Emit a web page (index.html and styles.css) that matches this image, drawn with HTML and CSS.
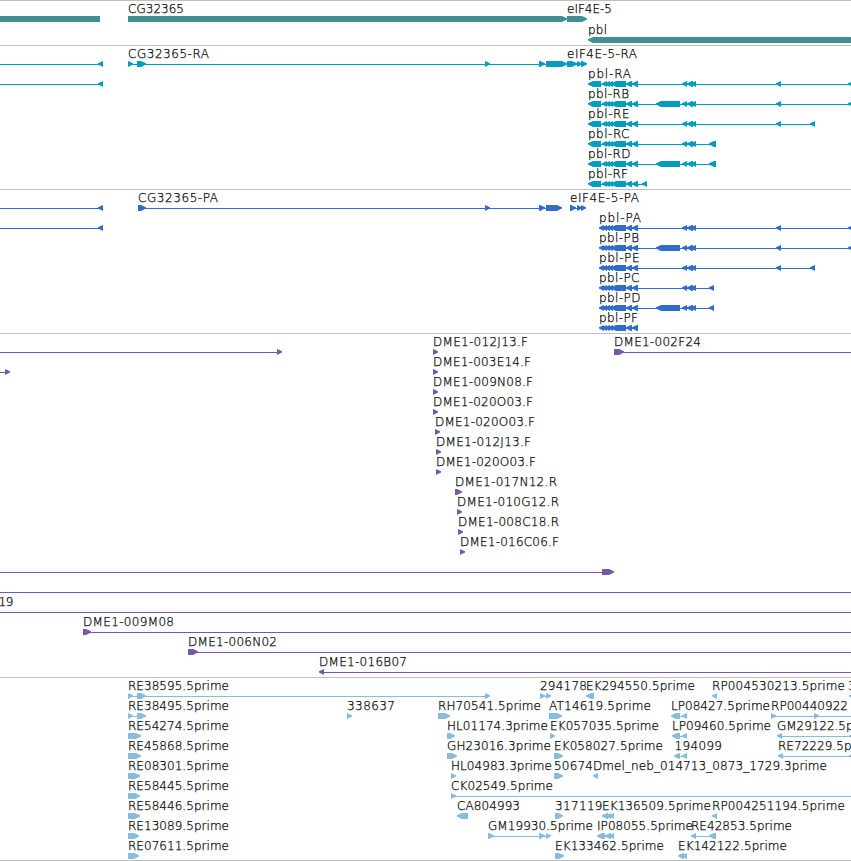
FILE: index.html
```html
<!DOCTYPE html>
<html lang="en">
<head>
<meta charset="utf-8">
<title>Genome browser</title>
<link rel="stylesheet" href="styles.css">
</head>
<body>
<main class="browser" id="browser"></main>
<script src="tracks.js"></script>
</body>
</html>
```
FILE: styles.css
```css
html, body {
  margin: 0;
  background: #fff;
}

body {
  overflow: hidden;
}

.browser {
  display: flex;
  flex-direction: column;
  width: 851px;
  border-bottom: 1px solid #bebebe;
}

.track {
  box-sizing: border-box;
  border-top: 1px solid #bebebe;
  overflow: hidden;
}

.track svg {
  display: block;
}

.genes { height: 45px; color: #3f8e94; }
.transcripts { height: 144px; color: #009dbf; }
.proteins { height: 144px; color: #316ccb; }
.bacs { height: 344px; color: #7758a7; }
.ests { height: 183px; color: #88bcdd; }

.label {
  fill: #000;
  stroke: #000;
  stroke-width: 0.25px;
  font: 200 12px "DejaVu Sans Light", "DejaVu Sans", sans-serif;
}

.shape {
  fill: currentColor;
}

.span {
  fill: currentColor;
  shape-rendering: crispEdges;
}
```
FILE: tracks.js
```js
// Feature: [row, label, label x, label end x, strand, span, exons]
// span is [from, to] or null; exons are [from, to] pairs.
const exonsR = [[588, 601], [602, 607], [605, 610], [608, 613], [611, 626], [626, 632], [632, 638]];
const exonsP = [[599, 604], [602, 607], [605, 610], [608, 613], [611, 626], [626, 632], [632, 638]];
const middle = [[682, 687], [687, 693], [691, 696]];
const big = [[656, 680]];
const far = [[776, 781]];
const edge = [[848, 860]];

const tracks = [
  { name: "genes", height: 44, pitch: 21, base: 12, features: [
    [0, "", 0, 0, 0, null, [[0, 100]]],
    [0, "CG32365", 128, 184, 1, null, [[128, 567]]],
    [0, "eIF4E-5", 567, 612, 1, null, [[567, 587]]],
    [1, "pbl", 588, 607, -1, null, [[588, 860]]]
  ]},
  { name: "transcripts", height: 143, pitch: 20, base: 12, features: [
    [0, "", 0, 0, -1, [0, 100], [[98, 103]]],
    [1, "", 0, 0, -1, [0, 100], [[98, 103]]],
    [0, "CG32365-RA", 128, 209, 1, [130, 560], [[128, 133], [137, 146], [485, 490], [539, 545], [546, 567]]],
    [0, "eIF4E-5-RA", 567, 637, 1, [570, 584], [[567, 577], [577, 582], [581, 587]]],
    [1, "pbl-RA", 588, 631, -1, [592, 851], [...exonsR, ...middle, ...far, ...edge]],
    [2, "pbl-RB", 588, 629, -1, [592, 851], [...exonsR, ...big, ...middle, ...far, ...edge]],
    [3, "pbl-RE", 588, 629.5, -1, [592, 812], [...exonsR, ...middle, ...far, [810, 815]]],
    [4, "pbl-RC", 588, 629.5, -1, [592, 712], [...exonsR, ...middle, [709, 716]]],
    [5, "pbl-RD", 588, 630.5, -1, [592, 712], [...exonsR, ...big, ...middle, [709, 716]]],
    [6, "pbl-RF", 588, 628, -1, [592, 645], [...exonsR, [642, 647]]]
  ]},
  { name: "proteins", height: 143, pitch: 20, base: 12, features: [
    [0, "", 0, 0, -1, [0, 100], [[98, 103]]],
    [1, "", 0, 0, -1, [0, 100], [[98, 103]]],
    [0, "CG32365-PA", 138, 218, 1, [140, 558], [[138, 146], [485, 490], [539, 545], [546, 562]]],
    [0, "eIF4E-5-PA", 570, 639, 1, [572, 584], [[570, 576], [577, 582], [581, 586]]],
    [1, "pbl-PA", 599, 641, -1, [602, 851], [...exonsP, ...middle, ...far, ...edge]],
    [2, "pbl-PB", 599, 639, -1, [602, 851], [...exonsP, ...big, ...middle, ...far, ...edge]],
    [3, "pbl-PE", 599, 639.5, -1, [602, 812], [...exonsP, ...middle, ...far, [810, 815]]],
    [4, "pbl-PC", 599, 639.5, -1, [602, 712], [...exonsP, ...middle, [709, 714]]],
    [5, "pbl-PD", 599, 640.5, -1, [602, 712], [...exonsP, ...big, ...middle, [709, 714]]],
    [6, "pbl-PF", 599, 638, -1, [602, 636], exonsP]
  ]},
  { name: "bacs", height: 343, pitch: 20, base: 12, features: [
    [0, "", 0, 0, 1, [0, 278], [[277, 282]]],
    [1, "", 0, 0, 1, [0, 6], [[5, 10]]],
    [0, "DME1-012J13.F", 433, 528, 1, null, [[433, 438]]],
    [1, "DME1-003E14.F", 433, 531, 1, null, [[433, 438]]],
    [2, "DME1-009N08.F", 433, 533, 1, null, [[433, 438]]],
    [3, "DME1-020O03.F", 433, 533, 1, null, [[433, 438]]],
    [4, "DME1-020O03.F", 435, 535, 1, null, [[435, 440]]],
    [5, "DME1-012J13.F", 436, 531, 1, null, [[436, 441]]],
    [6, "DME1-020O03.F", 436, 536, 1, null, [[436, 441]]],
    [7, "DME1-017N12.R", 455, 557, 1, null, [[455, 462]]],
    [8, "DME1-010G12.R", 457, 559, 1, null, [[457, 462]]],
    [9, "DME1-008C18.R", 458, 559, 1, null, [[458, 463]]],
    [10, "DME1-016C06.F", 460, 559, 1, null, [[460, 465]]],
    [0, "DME1-002F24", 614, 701, 1, [616, 851], [[614, 624]]],
    [11, "", 0, 0, 1, [0, 603], [[602, 614]]],
    [12, "", 0, 0, 1, [0, 851], []],
    [13, "19", -1.5, 13.5, 1, [0, 851], []],
    [14, "DME1-009M08", 83, 174, 1, [85, 851], [[83, 91]]],
    [15, "DME1-006N02", 188, 277, 1, [190, 851], [[188, 198]]],
    [16, "DME1-016B07", 319, 407, -1, [322, 851], [[319, 324]]]
  ]},
  { name: "ests", height: 182, pitch: 20, base: 12, features: [
    [0, "RE38595.5prime", 128, 229, 1, [130, 487], [[128, 133], [137, 146], [485, 490]]],
    [1, "RE38495.5prime", 128, 229, 1, [130, 140], [[128, 133], [137, 146]]],
    [2, "RE54274.5prime", 128, 229, 1, null, [[128, 141]]],
    [3, "RE45868.5prime", 128, 229, 1, null, [[128, 141]]],
    [4, "RE08301.5prime", 128, 229, 1, null, [[128, 140]]],
    [5, "RE58445.5prime", 128, 229, 1, null, [[128, 140]]],
    [6, "RE58446.5prime", 128, 229, 1, null, [[128, 140]]],
    [7, "RE13089.5prime", 128, 229, 1, null, [[128, 139]]],
    [8, "RE07611.5prime", 128, 229, 1, null, [[128, 139]]],
    [1, "338637", 347, 395, 1, null, [[347, 352]]],
    [0, "294178", 540, 587, 1, [541, 549], [[540, 545], [546, 551]]],
    [0, "EK294550.5prime", 586, 695, -1, null, [[586, 594]]],
    [0, "RP004530213.5prime", 712, 845, -1, null, [[712, 717]]],
    [0, "3", 848, 855.5, -1, null, [[849, 854]]],
    [1, "RH70541.5prime", 438, 541, 1, null, [[438, 450]]],
    [1, "AT14619.5prime", 549, 651, 1, null, [[549, 562]]],
    [1, "LP08427.5prime", 671, 770, -1, [675, 685], [[671, 680], [682, 687]]],
    [1, "RP00440922", 771, 848, 1, [773, 851], [[771, 776], [814, 819]]],
    [2, "HL01174.3prime", 447, 548, 1, null, [[447, 455]]],
    [2, "EK057035.5prime", 550, 659, 1, null, [[550, 555]]],
    [2, "LP09460.5prime", 672, 771, -1, [676, 685], [[672, 680], [682, 687]]],
    [2, "GM29122.5p", 777, 853.5, -1, [780, 851], [[777, 782], [849, 854]]],
    [3, "GH23016.3prime", 447, 551, 1, null, [[447, 457]]],
    [3, "EK058027.5prime", 554, 663, 1, null, [[554, 563]]],
    [3, "194099", 674.5, 722, -1, [677, 685], [[674, 680], [682, 687]]],
    [3, "RE72229.5p", 778, 851.5, -1, [781, 851], [[778, 783], [849, 854]]],
    [4, "HL04983.3prime", 451, 552, 1, null, [[451, 456]]],
    [4, "50674", 554, 593, 1, null, [[554, 563]]],
    [4, "Dmel_neb_014713_0873_1729.3prime", 593, 827, -1, null, [[593, 598]]],
    [5, "CK02549.5prime", 451, 553, 1, [453, 851], [[451, 456]]],
    [6, "CA804993", 457, 520, -1, null, [[457, 468]]],
    [6, "317119", 555, 602.5, 1, null, [[555, 563]]],
    [6, "EK136509.5prime", 602, 711, -1, null, [[602, 608], [606, 611], [609, 614]]],
    [6, "RP004251194.5prime", 712, 845, -1, null, [[712, 717]]],
    [7, "GM19930.5prime", 488, 593, 1, [490, 549], [[488, 494], [539, 545], [546, 551]]],
    [7, "IP08055.5prime", 597, 693, -1, [600, 611], [[597, 605], [605, 611], [609, 614]]],
    [7, "RE42853.5prime", 691, 792, -1, [694, 713], [[691, 696], [709, 716]]],
    [8, "EK133462.5prime", 555, 664, 1, null, [[555, 564]]],
    [8, "EK142122.5prime", 678, 787, -1, null, [[678, 684], [682, 687]]]
  ]}
];

// A six pixel tall box whose last five pixels taper towards the strand.
function exon(strand, a, b, y) {
  if (!strand) return `<rect class="span" x="${a}" y="${y}" width="${b - a}" height="6"/>`;
  const tip = strand > 0 ? b : a;
  const tail = strand > 0 ? a : b;
  const neck = tip - strand * 5;
  return `<polygon class="shape" points="${tail},${y} ${neck},${y} ${tip},${y + 2.3} ${tip},${y + 3.5} ${neck},${y + 6} ${tail},${y + 6}"/>`;
}

document.getElementById("browser").innerHTML = tracks.map(track => {
  const shapes = track.features.map(([row, label, x, end, strand, span, exons]) => {
    const base = track.base + row * track.pitch;
    const top = base + 3;
    let out = "";
    if (span) out += `<rect class="span" x="${span[0]}" y="${top + 3}" width="${span[1] - span[0]}" height="1"/>`;
    out += exons.map(([a, b]) => exon(strand, a, b, top)).join("");
    if (label) out += `<text class="label" x="${x}" y="${base}" textLength="${end - x}">${label}</text>`;
    return out;
  }).join("");
  return `<section class="track ${track.name}"><svg width="851" height="${track.height}">${shapes}</svg></section>`;
}).join("");
```
